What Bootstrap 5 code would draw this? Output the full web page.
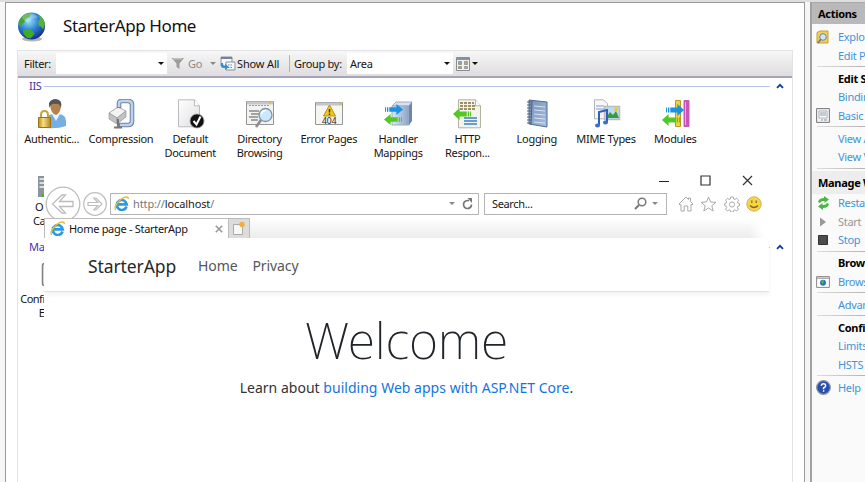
<!DOCTYPE html>
<html lang="en">
<head>
<meta charset="utf-8">
<meta name="viewport" content="width=device-width, initial-scale=1">
<title>StarterApp Home</title>
<link href="https://cdn.jsdelivr.net/npm/bootstrap@5.3.0/dist/css/bootstrap.min.css" rel="stylesheet">
<style>
html,body{height:100%}
body{font:11px/14px "Noto Sans","Open Sans",sans-serif;letter-spacing:-.3px;color:#151515;background:#f6f6f6;overflow:hidden}
svg{display:block;flex:none}
.app{height:482px;border-top:2px solid #dedede}
.pane{width:800px;margin-left:5px;border:1px solid #999;border-bottom:0;background:#fff}
.title-row{height:47px;padding-left:11px}
.title-row h1{font-size:17px;line-height:24px;font-weight:400;letter-spacing:-.42px;margin:-1px 0 0 16px;color:#111}
.feature-view{width:776px;margin-left:11px;border:1px solid #e3e3e6;border-bottom:0;height:433px}
.tools{height:27px;background:linear-gradient(#f7f7f7,#dfdddf);border-bottom:2px solid #a6a4b8}
.tools>*{flex-shrink:0}
.field{height:21px;background:#fff}
.tri{width:0;height:0;border:3px solid transparent;border-top-color:#111;border-bottom:0;flex:none}
.tri.dim{border-top-color:#888}
.group-head{height:16px;color:#4336a5}
.group-line{height:1px;background:#b7c3e6;width:726px}
.tiles{display:grid;grid-template-columns:repeat(10,69.3px);text-align:center;margin-left:-1px}
.tile{height:68px}
.tile svg{margin:0 auto 3px}
.tile-label{white-space:nowrap}
.tile-low{padding:2px 0 0 2px}
.tile-low svg{margin-bottom:1px}
.ie{left:38px;top:165px;width:725px;height:315px;background:#fff}
.win-buttons{height:23px;padding:2px 16px 0 0;gap:31px}
.address,.search{height:22px;border:1px solid #b4b4b4;background:#fff}
.tab-row{height:20px;margin-top:2px}
.tab-on{width:185px;border:1px solid #bbb;border-bottom:0;background:#fff}
.tab-new{width:21px;background:#dcdcdc;border:1px solid #bbb;border-left:0;border-bottom:0}
.tab-rest{background:linear-gradient(#fff,#ececec);-webkit-mask-image:linear-gradient(90deg,#000 97%,transparent)}
.site-nav{height:54px;padding-top:2px;border-bottom:1px solid #dee2e6;box-shadow:0 3px 4px rgba(0,0,0,.05);font-size:14px;letter-spacing:-.1px;color:#53575c}
.site-brand{font-size:17.5px;letter-spacing:-.1px;color:#26292c}
.hero-title{font-size:50px;line-height:56px;font-weight:200;letter-spacing:-.2px;color:#212529;margin:0}
.hero-text{font-size:14px;line-height:20px;letter-spacing:.02px;color:#333}
.hero-text a{color:#1474e0;text-decoration:none}
.actions{width:55px;margin-left:5px;border-left:2px solid #a2a2a5;background:#fafafa;overflow:hidden;white-space:nowrap}
.act-head{height:22px;padding-left:6px;font-weight:700;background:#b9b9b9;color:#000;border-top:1px solid #aaa}
.act-sub{height:23px;padding-left:6px;font-weight:700;background:#ededed;color:#000}
.act{height:18.5px;color:#3f95d8}
.act-icon{width:26px;height:18px;display:flex;align-items:center;justify-content:center;flex:none;padding-right:4px}
.act.strong{font-weight:700;color:#000}
.act.off{color:#979797}
.rule{height:4.5px;padding-top:1px}
.rule::before{content:"";display:block;height:1px;margin-left:5px;background:linear-gradient(90deg,#ddd,#b5b5b5)}
</style>
<script src="https://cdn.jsdelivr.net/npm/bootstrap@5.3.0/dist/js/bootstrap.bundle.min.js"></script>
</head>
<body>
<svg width="0" height="0" class="position-absolute" aria-hidden="true">
<defs>
<radialGradient id="sea" cx=".4" cy=".3" r=".75"><stop offset="0" stop-color="#9be4f8"/><stop offset=".5" stop-color="#2d7ed6"/><stop offset="1" stop-color="#14257e"/></radialGradient>
<linearGradient id="paper" x2="1" y2="1"><stop stop-color="#fff"/><stop offset="1" stop-color="#dedfe3"/></linearGradient>
<linearGradient id="gold" x2="1"><stop stop-color="#b88b1e"/><stop offset=".4" stop-color="#f7df7e"/><stop offset="1" stop-color="#b5861a"/></linearGradient>
<linearGradient id="steel" x2="1"><stop stop-color="#dde8f5"/><stop offset="1" stop-color="#8aa3c4"/></linearGradient>
<linearGradient id="book" x2="1" y2="1"><stop stop-color="#7591b9"/><stop offset="1" stop-color="#a9bfdd"/></linearGradient>
<symbol id="ie-logo" viewBox="0 0 16 16"><path d="M13.400 11.200A5.300 5.300 0 1 1 13.600 8.900H4.500" fill="none" stroke="#2b9be0" stroke-width="2.800"/><path d="M2 14.800C-.5 13 3 6.800 7.500 3.400 11 .8 15.500-.2 15.200 3.200" fill="none" stroke="#f0bb2b" stroke-width="1.500"/></symbol>
<symbol id="arrow-r" viewBox="0 0 20 12" preserveAspectRatio="none"><path d="M0 3.500h1v5H0zM2 3.500h1.500v5H2zM4.500 3.500H12V0l7 6-7 6V8.500H4.500z"/></symbol>
<symbol id="collapse" viewBox="0 0 8 6"><path d="M1 4.800 4 1.800l3 3" fill="none" stroke="#123d9e" stroke-width="1.900"/></symbol>
</defs>
</svg>
<div class="app d-flex">
<main class="pane position-relative flex-shrink-0">
  <header class="title-row d-flex align-items-center">
    <svg width="30" height="32" viewBox="0 0 30 32"><ellipse cx="15" cy="28" rx="10" ry="2.500" fill="#b5b5b5"/><circle cx="14.500" cy="15" r="13.500" fill="url(#sea)"/><path d="M1.500 13C3 7 6 3.500 11 2l3 1-1.500 3-4 2-1 3.500-3 1.500-1 3z" fill="#42a82c"/><path d="M21 3.500c4 2 6.500 6 7 10l-2 5-2-3-2-.5-1-4 2-3z" fill="#55b335"/><path d="M6 19l5-1.500 5 2.500 1.500 3-4 4.500-4-1-3-4z" fill="#3dac2b"/><path d="M5 6c5-5 13-4 16 0-5 2-8 1-10 6-3-1-5-3-6-6z" fill="#fff" opacity=".25"/></svg>
    <h1>StarterApp Home</h1>
  </header>
  <section class="feature-view">
    <div class="tools d-flex align-items-center">
      <span style="width:38px;padding-left:6px">Filter:</span>
      <div class="field d-flex align-items-center justify-content-end" style="width:111px;padding-right:3px"><i class="tri"></i></div>
      <svg style="margin-left:4px" width="14" height="13" viewBox="0 0 14 13"><path d="M.5 1h12.500L8.500 6.500V12l-3-2V6.500z" fill="#9c9c9c"/><path d="M2 1.800h9" stroke="#d2d2d2"/></svg>
      <span style="color:#8a8a8a;width:22px;margin-left:3px">Go</span>
      <i class="tri dim"></i>
      <svg style="margin-left:4px" width="16" height="15" viewBox="0 0 16 15"><path d="M1 1h11v9H1z" fill="#f7f9fb" stroke="#8791a0"/><path d="M1 2h11" stroke="#75849b" stroke-width="2"/><path d="M6 6h9v8H6z" fill="#f5f8fd" stroke="#8791a0"/><path d="M8 9h5M8 11.500h5" stroke="#6688c7" stroke-dasharray="1.500 1"/><path d="M1 7v3q0 2 4 2v2l4-3-4-3.200V10Q3 10 3 7z" fill="#2f91d8"/></svg>
      <span style="width:52px;margin-left:1px;letter-spacing:-.15px">Show All</span>
      <span style="width:1px;height:17px;background:#b7b4a0"></span>
      <span style="margin-left:4px;width:53px">Group by:</span>
      <div class="field d-flex align-items-center justify-content-between" style="width:106px;padding:0 3px"><span>Area</span><i class="tri"></i></div>
      <svg style="margin-left:3px" width="14" height="14" viewBox="0 0 14 14"><path d="M.5.5h13v13H.5z" fill="#f2f2ec" stroke="#8b8b91"/><path d="M1 2h12" stroke="#8792a7" stroke-width="2"/><path d="M2.500 4.500h3v3h-3zm0 5h3v2h-3z" fill="#83a7bc" stroke="#9b9b8b"/><path d="M8.500 4.500h3v3h-3zm0 5h3v2h-3z" fill="#bda580" stroke="#9b9b9b"/></svg>
      <i class="tri" style="margin-left:2px"></i>
    </div>
    <div class="group-head d-flex align-items-center"><span style="width:26px;padding-left:11px">IIS</span><span class="group-line"></span><svg style="margin-left:6px" width="8" height="6"><use href="#collapse"/></svg></div>
    <div class="tiles" style="padding-top:5px">
      <div class="tile"><svg width="30" height="30" viewBox="0 0 30 30"><path d="M9 29V21q1-6 7-6h6q7 1 7 7v5q-8 3-20 2z" fill="#75aee1"/><path d="m15 15 4 7 4-7z" fill="#eaf5ff"/><path d="M13 6q1-5 6-5 5 1 5 6-1 8-5 9-5-1-6-10z" fill="#b6804f"/><path d="M12 9V4q2-4 7-4 7 1 5 9-2-5-5-4-5-1-7 4z" fill="#555"/><path d="M4 19v-3q0-4 3.500-4t3.500 4v3" fill="none" stroke="#c9a337" stroke-width="2"/><path d="M1.500 18.500h12v10h-12z" fill="url(#gold)" stroke="#9b7318"/></svg><div class="tile-label">Authentic...</div></div>
      <div class="tile"><svg width="30" height="30" viewBox="0 0 30 30"><path d="m3 14 9-6 8 4-9 7z" fill="#f3f3f3" stroke="#aaa"/><path d="m3 14 8 5v6l-8-5zM11 19l9-7v6l-9 7z" fill="#bfc2c6" stroke="#999" stroke-width=".7"/><path d="M13 9V4q0-2 3-2h6q4 0 4 4v16q0 4-4 4h-9" fill="none" stroke="#6886ac" stroke-width="4.600"/><path d="M13 8V4q0-2 3-2h6q4 0 4 4v16q0 4-4 4h-8" fill="none" stroke="#c1d2e8" stroke-width="2.500"/><path d="M12 20v8M8 28.500h8" stroke="#777" stroke-width="2"/></svg><div class="tile-label">Compression</div></div>
      <div class="tile"><svg width="30" height="30" viewBox="0 0 30 30"><path d="M3.500.8h16l5 6v21h-21z" fill="url(#paper)" stroke="#bbb"/><path d="M19.500.8v6h5" fill="#fff" stroke="#bbb"/><circle cx="22" cy="22" r="7" fill="#111" stroke="#999" stroke-width=".8"/><path d="m18.500 22 3 3.500 4-8" fill="none" stroke="#fff" stroke-width="2"/></svg><div class="tile-label">Default<br>Document</div></div>
      <div class="tile"><svg width="30" height="30" viewBox="0 0 30 30"><path d="M1.500 2.500h27v23h-27z" fill="#f3f3f1" stroke="#969696"/><path d="M2 4h26" stroke="#c8c8ca" stroke-width="3"/><path d="M24 4h2" stroke="#e3c335" stroke-width="2"/><path d="M4 6.500h20" stroke="#999" stroke-dasharray="2 1"/><path d="M4 12h10M6 15h8M4 18h9M6 21h7" stroke="#555" stroke-width="1.200"/><path d="m16 21-5 7" stroke="#8b8b8b" stroke-width="2.600"/><circle cx="20.500" cy="16" r="6.500" fill="#c8e8fb" stroke="#86929e" stroke-width="1.300"/><path d="M16.500 15q1-4 5-3.500" stroke="#fff" stroke-width="1.500" fill="none"/></svg><div class="tile-label">Directory<br>Browsing</div></div>
      <div class="tile"><svg width="30" height="30" viewBox="0 0 30 30"><path d="M1.500 3.500h27v22h-27z" fill="#f5f5f2" stroke="#969696"/><path d="M2 5h26" stroke="#c2c5cc" stroke-width="3"/><path d="M25 5h2" stroke="#e3c335" stroke-width="2"/><path d="m15.500 6 6 11h-12z" fill="#f5c81c" stroke="#bf8d0b"/><path d="M15.500 10v3.500m0 1v1.500" stroke="#333" stroke-width="1.500"/><text x="15.300" y="25" font-size="8.500" text-anchor="middle" fill="#222" letter-spacing="0">404</text></svg><div class="tile-label">Error Pages</div></div>
      <div class="tile"><svg width="30" height="30" viewBox="0 0 30 30"><path d="m9 7 4-4h16l-3 4z" fill="#d8e2ef" stroke="#9aacc6"/><path d="M9 7h17v19H9z" fill="url(#steel)" stroke="#9aacc6"/><path d="m26 7 3-4v19l-3 4z" fill="#6c86ae"/><use href="#arrow-r" x="2" y="5" width="19" height="11" fill="#1b91e4"/><use href="#arrow-r" width="19" height="11" transform="matrix(-1 0 0 1 19 15)" fill="#52c825"/></svg><div class="tile-label">Handler<br>Mappings</div></div>
      <div class="tile"><svg width="30" height="30" viewBox="0 0 30 30"><path d="M6.500.8h17l5 6v22h-22z" fill="#f4f4ec" stroke="#b3b39f"/><path d="M23.500.8v6h5" fill="#fff" stroke="#b3b39f"/><path d="M8 4h14M8 7h15M8 10h16" stroke="#7d7038" stroke-width="1.600" stroke-dasharray="3 1"/><path d="M12 19h13M12 22h13M12 25h13" stroke="#3c80c5" stroke-width="1.300"/><use href="#arrow-r" width="19" height="12" transform="matrix(-1 0 0 1 19 9)" fill="#52c825"/></svg><div class="tile-label">HTTP<br>Respon...</div></div>
      <div class="tile"><svg width="30" height="30" viewBox="0 0 30 30"><path d="m7 1 18 2v25L7 25z" fill="url(#book)" stroke="#536d94"/><path d="m10 1.500-1 24" stroke="#49628a"/><path d="m12 7 11 1m-11 3 11 1m-11 3 11 1m-11 3 11 1m-11 3 11 1" stroke="#d4e3f5"/><path d="M5 3h4M5 6h4M5 9h4M5 12h4M5 15h4M5 18h4M5 21h4M5 24h4" stroke="#555f70" stroke-width="1.100"/></svg><div class="tile-label">Logging</div></div>
      <div class="tile"><svg width="30" height="30" viewBox="0 0 30 30"><path d="M3.500.8h9l4 4v15h-13z" fill="#f7f7f7" stroke="#b5b5b5"/><path d="M5 7h8M5 10h8" stroke="#7a9bd0"/><path d="M13.500 7.500h15v13h-15z" fill="#b6ddf7" stroke="#bbb" stroke-width="1.500"/><path d="m15 19 4-6 3 3 3-4 3 7z" fill="#3d9a36"/><circle cx="25" cy="10.500" r="1.800" fill="#eec52b"/><path d="M8 26V13l8-2v12" fill="none" stroke="#315fb8" stroke-width="2"/><ellipse cx="6.500" cy="26.500" rx="2.500" ry="2" fill="#3970cd"/><ellipse cx="14.500" cy="23.500" rx="2.500" ry="2" fill="#3970cd"/></svg><div class="tile-label">MIME Types</div></div>
      <div class="tile"><svg width="30" height="30" viewBox="0 0 30 30"><path d="M15.500 1.500h5v26h-5z" fill="#ead33c" stroke="#b69b22"/><path d="M24 1.500h5v26h-5z" fill="#d34fc0" stroke="#b665ab"/><path d="M25.500 3v23" stroke="#f0a7e4"/><use href="#arrow-r" x="6" y="5" width="19" height="12" fill="#1b91e4"/><use href="#arrow-r" width="19" height="12" transform="matrix(-1 0 0 1 20 15)" fill="#52c825"/></svg><div class="tile-label">Modules</div></div>
      <div class="tile tile-low"><svg width="30" height="30" viewBox="0 0 30 30"><path d="M0 7h14v21H0z" fill="#8b949b"/><path d="M1.500 9h5v2h-5zm0 4h5v2h-5zm0 4h5v2h-5z" fill="#d8dde0"/><path d="M4 25h4v3H4z" fill="#47b435"/></svg><div class="tile-label">Output<br>Caching</div></div>
    </div>
    <div class="group-head d-flex align-items-center" style="margin-top:4px"><span style="padding-left:11px;width:75px">Management</span><span class="group-line" style="width:677px"></span><svg style="margin-left:6px" width="8" height="6"><use href="#collapse"/></svg></div>
    <div class="tiles" style="padding-top:4px"><div class="tile tile-low"><svg width="30" height="30" viewBox="0 0 30 30"><rect x="4.500" y="2.500" width="22" height="22" rx="2" fill="#f4f4f4" stroke="#7f858b" stroke-width="1.500"/><path d="M7 4v19" stroke="#a9afb5"/></svg><div class="tile-label" style="letter-spacing:-.5px">Configuration<br>Editor</div></div></div>
  </section>

  <section class="ie position-absolute">
    <div class="win-buttons d-flex justify-content-end align-items-center">
      <svg width="10" height="10"><path d="M0 5.500h10" stroke="#222"/></svg>
      <svg width="11" height="11"><path d="M1 1h9v9H1z" fill="none" stroke="#333" stroke-width="1.200"/></svg>
      <svg width="11" height="11"><path d="m1 1 9 9m0-9-9 9" stroke="#333" stroke-width="1.200"/></svg>
    </div>
    <div class="d-flex align-items-center" style="height:25px">
      <svg width="36" height="36" viewBox="0 0 36 36" style="margin-left:1px"><circle cx="18" cy="18" r="16.800" fill="#fff" stroke="#bdbdbd" stroke-width="1.300"/><path d="M7.500 18 17 9h3.500l-6 6.500H28v5H14.500l6 6.500H17z" fill="none" stroke="#bdbdbd" stroke-width="1.300"/></svg>
      <svg width="24" height="24" viewBox="0 0 24 24" style="margin-left:2px"><circle cx="12" cy="12" r="11.300" fill="#fff" stroke="#bdbdbd" stroke-width="1.200"/><path d="m19 12-6-6h-2.200l4 4.500H5v3h9.800l-4 4.500H13z" fill="none" stroke="#bdbdbd" stroke-width="1.200"/></svg>
      <div class="address d-flex align-items-center" style="width:369px;margin-left:3px;padding:0 5px 0 3px">
        <svg width="15" height="15"><use href="#ie-logo"/></svg>
        <span class="flex-grow-1" style="margin-left:4px;color:#777;letter-spacing:-.12px">http://<span style="color:#222">localhost</span>/</span>
        <i class="tri dim"></i>
        <svg width="11" height="12" viewBox="0 0 11 12" style="margin-left:7px"><path d="M9.500 6.500A4 4 0 1 1 7 2.800" fill="none" stroke="#777" stroke-width="1.700"/><path d="M5.500 0H10v5z" fill="#777"/></svg>
      </div>
      <div class="search d-flex align-items-center" style="width:183px;margin-left:5px;padding:0 8px 0 7px">
        <span class="flex-grow-1" style="letter-spacing:-.35px">Search...</span>
        <svg width="13" height="13" viewBox="0 0 13 13"><circle cx="8" cy="5" r="3.800" fill="none" stroke="#777" stroke-width="1.500"/><path d="M5 8 1 12" stroke="#777" stroke-width="1.900"/></svg>
        <i class="tri dim" style="margin-left:5px"></i>
      </div>
      <svg width="16" height="16" viewBox="0 0 16 16" style="margin-left:11px"><path d="M1 8 8 1l2.500 2.500V2h2v3.500L15 8l-1 1-1-.5V15H9.800v-5H6.200v5H3V8.500L2 9z" fill="none" stroke="#aaa"/></svg>
      <svg width="17" height="16" viewBox="0 0 17 16" style="margin-left:6px"><path d="m8.500 1 2.100 5 5.400.3-4.200 3.400L13.200 15l-4.700-3-4.700 3 1.400-5.300L1 6.300 6.400 6z" fill="none" stroke="#aaa"/></svg>
      <svg width="16" height="16" viewBox="0 0 16 16" style="margin-left:7px"><path d="M6.700 1h2.600l.4 2 1.200.5 1.800-1.200 1.900 1.900-1.200 1.700.5 1.200 1.600.4v2.200l-1.700.5-.4 1.200 1.100 1.800-1.800 1.800-1.800-1.100-1.200.5-.4 1.600H6.700l-.4-1.700-1.200-.5-1.700 1.200-1.800-1.800 1.100-1.800-.5-1.200-1.500-.5V7.500l1.500-.4.5-1.200-1.100-1.700 1.800-1.900 1.700 1.200L6.300 3z" fill="none" stroke="#aaa"/><circle cx="8" cy="8.500" r="2.600" fill="none" stroke="#aaa"/></svg>
      <svg width="16" height="16" viewBox="0 0 16 16" style="margin-left:6px"><circle cx="8" cy="8" r="7.200" fill="#f9d43e" stroke="#c9b26d"/><path d="M5.800 4.500v2.500m4.400-2.500v2.500M4 9.500q4 4 8 0" fill="none" stroke="#7b6534" stroke-width="1.200"/></svg>
    </div>
    <div class="tab-row d-flex position-relative">
      <div class="tab-on d-flex align-items-center" style="padding:0 5px">
        <svg width="15" height="15"><use href="#ie-logo"/></svg>
        <span class="flex-grow-1" style="margin-left:4px">Home page - StarterApp</span>
        <svg width="8" height="8"><path d="m.8.8 6.400 6.400m0-6.400L.8 7.200" stroke="#999" stroke-width="1.600"/></svg>
      </div>
      <div class="tab-new d-flex align-items-center justify-content-center"><svg width="14" height="15" viewBox="0 0 14 15"><path d="M1.500 3.500h9v10h-9z" fill="#f8f8f8" stroke="#aaa"/><circle cx="10" cy="3.500" r="2.700" fill="#f2ae3d"/></svg></div>
      <div class="tab-rest flex-grow-1" style="margin-right:5px"></div>
    </div>
    <nav class="site-nav d-flex align-items-center">
      <span class="site-brand" style="margin-left:44px;width:110px">StarterApp</span>
      <span style="width:54.500px">Home</span><span>Privacy</span>
    </nav>
    <div class="text-center" style="padding-top:20px">
      <h2 class="hero-title">Welcome</h2>
      <p class="hero-text mb-0" style="margin-top:10px">Learn about <a href="#">building Web apps with ASP.NET Core</a>.</p>
    </div>
  </section>
</main>

<aside class="actions flex-shrink-0">
  <div class="act-head d-flex align-items-center">Actions</div>
  <div style="height:4px"></div>
  <div class="act d-flex align-items-center"><span class="act-icon"><svg width="14" height="15" viewBox="0 0 14 15"><path d="M1 2.500 4 1h8v12H1z" fill="#efce5a" stroke="#c89c32"/><circle cx="7" cy="7" r="3.300" fill="#cae8f7" stroke="#708593"/><path d="m5 9-3 4" stroke="#777" stroke-width="1.600"/></svg></span>Explore</div>
  <div class="act d-flex align-items-center"><span class="act-icon"></span>Edit Permissions...</div>
  <div class="rule"></div>
  <div class="act strong d-flex align-items-center"><span class="act-icon"></span>Edit Site</div>
  <div class="act d-flex align-items-center"><span class="act-icon"></span>Bindings...</div>
  <div class="act d-flex align-items-center"><span class="act-icon"><svg width="14" height="15" viewBox="0 0 14 15"><path d="M.6.6h12.800v13.800H.6z" fill="#f0f2f4" stroke="#777"/><path d="M3 3h8v7H3z" fill="#fff" stroke="#a8b1ba"/><path d="M4 5h6M4 7h6m-5 5h2m1 0h3" stroke="#8a96a3"/></svg></span>Basic Settings...</div>
  <div class="rule"></div>
  <div class="act d-flex align-items-center"><span class="act-icon"></span>View Applications</div>
  <div class="act d-flex align-items-center"><span class="act-icon"></span>View Virtual Directories</div>
  <div class="rule"></div>
  <div class="act-sub d-flex align-items-center">Manage Website</div>
  <div class="act d-flex align-items-center"><span class="act-icon"><svg width="13" height="14" viewBox="0 0 13 14"><path d="M1 6q1-4 6-4V0l5 3.500L7.500 7V5Q4 4.500 3 7zM12 8q-1 4-6 4v2L1 10.500 5.500 7v2Q9 9.500 10 7z" fill="#4db642"/></svg></span>Restart</div>
  <div class="act off d-flex align-items-center"><span class="act-icon"><svg width="8" height="10"><path d="m1 .5 6 4.500-6 4.500z" fill="#999"/></svg></span>Start</div>
  <div class="act d-flex align-items-center"><span class="act-icon"><svg width="10" height="10"><path d="M.5.5h9v9h-9z" fill="#4c4c4c" stroke="#333"/></svg></span>Stop</div>
  <div class="rule"></div>
  <div class="act strong d-flex align-items-center"><span class="act-icon"></span>Browse Website</div>
  <div class="act d-flex align-items-center"><span class="act-icon"><svg width="14" height="12" viewBox="0 0 14 12"><path d="M.6.6h12.800v10.800H.6z" fill="#fff" stroke="#888"/><path d="M1 2.200h12" stroke="#a6abb2" stroke-width="1.500"/><circle cx="7" cy="6.800" r="3" fill="#2674b9"/><path d="M5 6q2-3 3-1.500L7 8z" fill="#59b842"/></svg></span>Browse *:80 (http)</div>
  <div class="rule"></div>
  <div class="act d-flex align-items-center"><span class="act-icon"></span>Advanced Settings...</div>
  <div class="rule"></div>
  <div class="act strong d-flex align-items-center"><span class="act-icon"></span>Configure</div>
  <div class="act d-flex align-items-center"><span class="act-icon"></span>Limits...</div>
  <div class="act d-flex align-items-center"><span class="act-icon"></span>HSTS</div>
  <div class="rule"></div>
  <div class="act d-flex align-items-center"><span class="act-icon"><svg width="15" height="15" viewBox="0 0 15 15"><circle cx="7.500" cy="7.500" r="6.800" fill="#274fa9" stroke="#8b929f" stroke-width="1.300"/><path d="M5.300 5.800Q5.500 3.800 7.500 3.800t2.200 1.700Q9.700 6.800 7.600 8v1.200m0 1v1.500" fill="none" stroke="#fff" stroke-width="1.500"/></svg></span>Help</div>
</aside>
</div>
</body>
</html>
